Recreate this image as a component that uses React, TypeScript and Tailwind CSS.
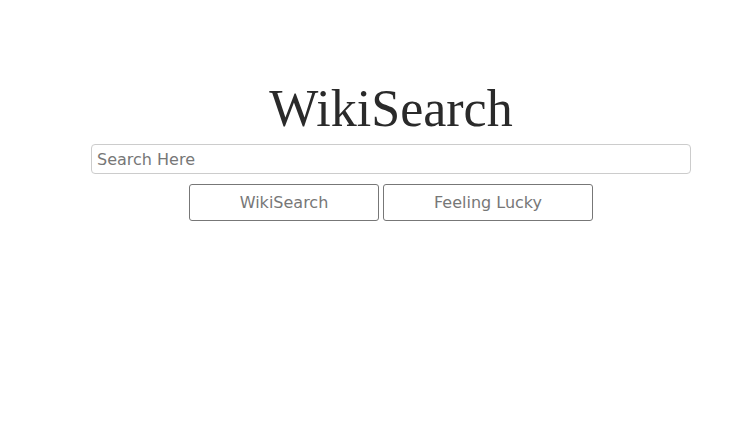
import React from "react";

export default function App() {
  return (
    <div className="w-[755px] h-[426px] bg-white">
      <div className="pt-[80px] pl-[91px] w-[691px]">
        <div className="w-[600px] flex flex-col items-center">
          <h1 className="text-[52px] leading-[58px] text-[#2a2a2a] font-['Liberation_Serif',serif]">
            WikiSearch
          </h1>
          <input
            className="mt-[6px] w-[600px] h-[30px] border border-[#cccccc] rounded-[4px] px-[5px] pt-[1px] text-[16px] text-[#555] placeholder:text-[#777] font-['DejaVu_Sans',sans-serif] outline-none"
            placeholder="Search Here"
          />
          <div className="mt-[10px] flex gap-[4px]">
            <button className="w-[190px] h-[37px] pt-[1px] border border-[#777] rounded-[3px] text-[#777] text-[16px] font-['DejaVu_Sans',sans-serif]">
              WikiSearch
            </button>
            <button className="w-[210px] h-[37px] pt-[1px] border border-[#777] rounded-[3px] text-[#777] text-[16px] font-['DejaVu_Sans',sans-serif]">
              Feeling Lucky
            </button>
          </div>
        </div>
      </div>
    </div>
  );
}
